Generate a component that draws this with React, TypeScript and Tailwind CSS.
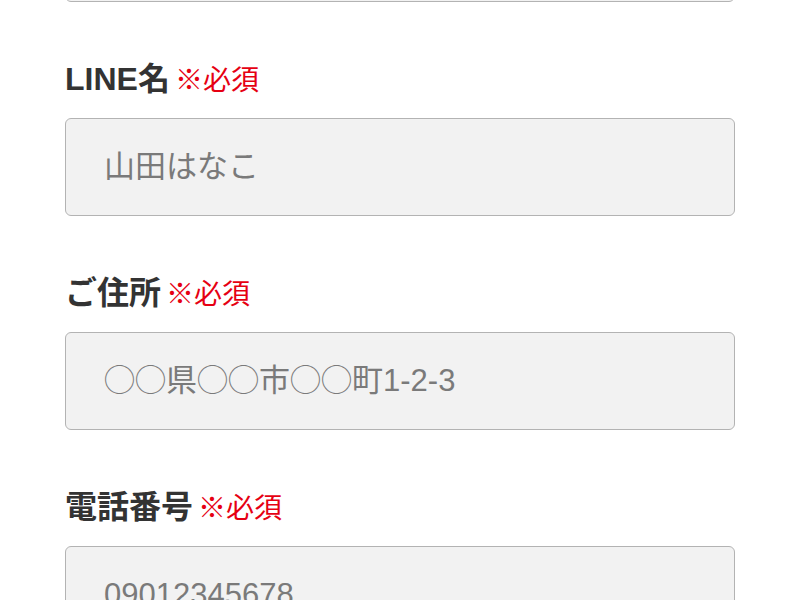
import React from 'react';

// Form fields shown in the screenshot (scrolled part of a longer form)
const fields = [
  { label: 'LINE名', placeholder: '山田はなこ', type: 'text' },
  { label: 'ご住所', placeholder: '◯◯県◯◯市◯◯町1-2-3', type: 'text' },
  { label: '電話番号', placeholder: '09012345678', type: 'tel' },
];

const inputClass =
  'block w-full h-[98px] rounded-[6px] border border-[#b3b3b3] bg-[#f2f2f2] px-[38px] text-[31px] text-[#333] placeholder:text-[#7a7a7a] outline-none';

export default function App() {
  return (
    <div
      className="min-h-screen bg-white overflow-hidden"
      style={{ fontFamily: '"Liberation Sans", "Noto Sans CJK JP", sans-serif' }}
    >
      <form className="mx-[65px] w-[670px]">
        {/* previous field, mostly scrolled out of view */}
        <div className="-mt-[96px]">
          <input className={inputClass} placeholder="" />
        </div>

        {fields.map((f) => (
          <div key={f.label} className="mt-[53px]">
            <label className="flex items-baseline h-[48px] mb-[15px] leading-[48px]">
              <span className="text-[32px] font-bold text-[#333]">{f.label}</span>
              <span className="ml-[5px] text-[28px] text-[#e60012]">※必須</span>
            </label>
            <input type={f.type} className={inputClass} placeholder={f.placeholder} />
          </div>
        ))}
      </form>
    </div>
  );
}
